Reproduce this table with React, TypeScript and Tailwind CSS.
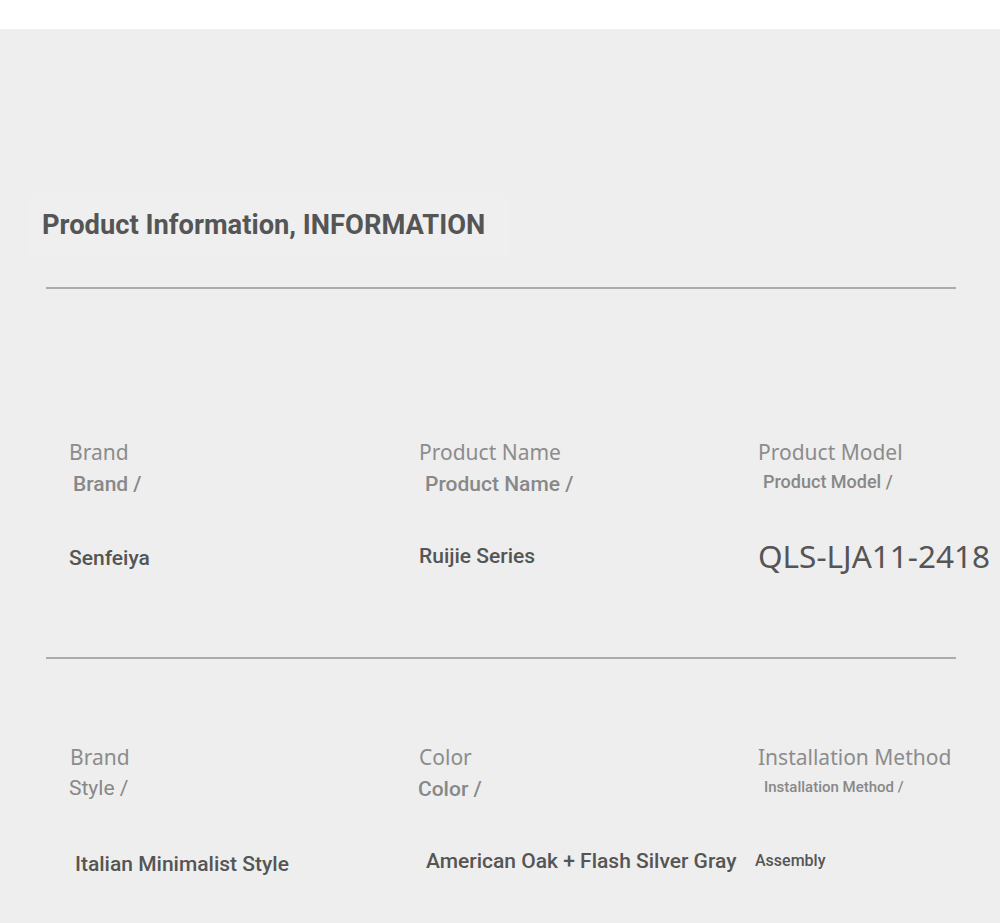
export default function App() {
  const label = "font-['Noto_Sans',sans-serif] text-[21px] leading-[28px] text-[#8c8c8c] whitespace-nowrap";
  const sub = "font-['Roboto',sans-serif] font-medium leading-[28px] text-[#888888] whitespace-nowrap";
  const value = "font-['Roboto',sans-serif] font-medium leading-[28px] text-[#555555] whitespace-nowrap";

  return (
    <div className="min-h-screen bg-[#eeeeee]">
      <div className="h-[29px] bg-white" />

      <section className="bg-[#eeeeee] pb-[60px]">
        {/* Title */}
        <div className="pt-[164px] pl-[30px]">
          <div className="inline-block bg-[#efefef] px-[12px] py-[16px] w-[480px]">
            <h1 className="font-['Roboto',sans-serif] font-bold text-[27.3px] leading-[32px] text-[#555555] whitespace-nowrap">
              Product Information, INFORMATION
            </h1>
          </div>
        </div>

        <div className="ml-[46px] w-[910px] mt-[30px] h-[2px] bg-[#ababab]" />

        {/* Row 1 */}
        <div className="grid grid-cols-[350px_339px_1fr] pl-[69px] pt-[149px]">
          <div>
            <p className={label}>Brand</p>
            <p className={`${sub} text-[21px] mt-[4px] pl-[4px]`}>Brand /</p>
            <p className={`${value} text-[21px] mt-[46px]`}>Senfeiya</p>
          </div>
          <div>
            <p className={label}>Product Name</p>
            <p className={`${sub} text-[21px] mt-[4px] pl-[6px]`}>Product Name /</p>
            <p className={`${value} text-[21px] mt-[44px]`}>Ruijie Series</p>
          </div>
          <div>
            <p className={label}>Product Model</p>
            <p className={`${sub} text-[18px] mt-[2px] pl-[5px]`}>Product Model /</p>
            <p className="font-['Noto_Sans',sans-serif] text-[31.5px] leading-[28px] text-[#555555] whitespace-nowrap mt-[46px]">
              QLS-LJA11-2418
            </p>
          </div>
        </div>

        <div className="ml-[46px] w-[910px] mt-[85px] h-[2px] bg-[#ababab]" />

        {/* Row 2 */}
        <div className="grid grid-cols-[350px_339px_1fr] pl-[69px] pt-[84px]">
          <div>
            <p className={`${label} pl-[1px]`}>Brand</p>
            <p className={`${sub} text-[21px] font-normal mt-[3px]`}>Style /</p>
            <p className={`${value} text-[21px] mt-[48px] pl-[6px]`}>Italian Minimalist Style</p>
          </div>
          <div>
            <p className={label}>Color</p>
            <p className={`${sub} text-[21px] mt-[4px] -ml-[1px]`}>Color /</p>
            <p className={`${value} text-[21px] mt-[44px] pl-[7px]`}>American Oak + Flash Silver Gray</p>
          </div>
          <div>
            <p className={`${label} text-[20.7px]`}>Installation Method</p>
            <p className={`${sub} text-[15px] mt-[2px] pl-[6px]`}>Installation Method /</p>
            <p className={`${value} text-[16px] mt-[46px] -ml-[3px]`}>Assembly</p>
          </div>
        </div>
      </section>
    </div>
  );
}
